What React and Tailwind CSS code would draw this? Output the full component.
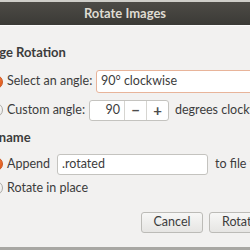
import React from "react";

const font = { fontFamily: 'Lato, "Open Sans", sans-serif' };

function Radio({ checked }) {
  return checked ? (
    <span className="flex h-[14px] w-[14px] shrink-0 items-center justify-center rounded-full border border-[#c9541f] bg-gradient-to-b from-[#f2783a] to-[#dd5515]">
      <span className="block h-[5px] w-[5px] rounded-full bg-white" />
    </span>
  ) : (
    <span className="block h-[14px] w-[14px] shrink-0 rounded-full border border-[#a9a8a4] bg-gradient-to-b from-[#fbfbfa] to-[#ebeae8]" />
  );
}

export default function App() {
  return (
    <div
      className="flex h-[250px] w-[250px] flex-col overflow-hidden bg-[#f2f1f0] text-[12.5px] text-[#3c3c3c]"
      style={font}
    >
      <div className="h-[2px] shrink-0 bg-[#cfcec9]" />
      <div className="flex h-[23px] shrink-0 items-center justify-center bg-gradient-to-b from-[#4d4b46] to-[#3b3a36] text-[13px] font-bold text-[#dfdbd2]">
        Rotate Images
      </div>
      <div className="h-[1px] shrink-0 bg-[#fbfbfb]" />

      <div className="ml-[-22px] flex flex-1 flex-col">
        <div className="mt-[18px] h-[16px] shrink-0 whitespace-nowrap text-[13px] font-bold leading-[16px]">Image Rotation</div>

        <div className="mt-[10px] flex h-[23px] shrink-0 items-center">
          <span className="ml-[11px] shrink-0"><Radio checked /></span>
          <span className="ml-[4px] w-[89px] shrink-0 whitespace-nowrap">Select an angle:</span>
          <div className="flex h-[23px] w-[200px] shrink-0 items-center whitespace-nowrap rounded-[3px] border border-[#e8b49a] bg-white px-[4px]">
            90° clockwise
          </div>
        </div>

        <div className="mt-[7px] flex h-[20px] shrink-0 items-center">
          <span className="ml-[11px] shrink-0"><Radio /></span>
          <span className="ml-[4px] w-[82px] shrink-0 whitespace-nowrap">Custom angle:</span>
          <div className="flex h-[21px] w-[80px] shrink-0 items-stretch rounded-[3px] border border-[#c4c3bf] bg-white">
            <div className="flex w-[34px] items-center justify-end pr-[4px]">90</div>
            <div className="flex w-[22px] items-center justify-center border-l border-[#d6d5d1] text-[15px] font-bold text-[#4c4c4c]">−</div>
            <div className="flex flex-1 items-center justify-center border-l border-[#d6d5d1] text-[15px] font-bold text-[#4c4c4c]">+</div>
          </div>
          <span className="ml-[6px] shrink-0 whitespace-nowrap">degrees clockwise</span>
        </div>

        <div className="mt-[9px] h-[16px] shrink-0 whitespace-nowrap text-[13px] font-bold leading-[16px]">Filename</div>

        <div className="mt-[9px] flex h-[20px] shrink-0 items-center">
          <span className="ml-[11px] shrink-0"><Radio checked /></span>
          <span className="ml-[4px] w-[50px] shrink-0 whitespace-nowrap">Append</span>
          <div className="flex h-[21px] w-[151px] shrink-0 items-center rounded-[3px] border border-[#c4c3bf] bg-white px-[4px]">
            .rotated
          </div>
          <span className="ml-[7px] shrink-0 whitespace-nowrap">to file title</span>
        </div>

        <div className="mt-[5px] flex h-[18px] shrink-0 items-center">
          <span className="ml-[11px] shrink-0"><Radio /></span>
          <span className="ml-[4px] shrink-0 whitespace-nowrap">Rotate in place</span>
        </div>
      </div>

      <div className="mb-[14px] flex shrink-0 gap-[6px] pl-[141px]">
        <button className="flex h-[21px] w-[62px] shrink-0 items-center justify-center rounded-[3px] border border-[#bcbbb7] bg-gradient-to-b from-[#f7f7f6] to-[#e6e5e3] text-[12.5px] text-[#3c3c3c]">
          Cancel
        </button>
        <button className="flex h-[21px] w-[62px] shrink-0 items-center justify-center rounded-[3px] border border-[#bcbbb7] bg-gradient-to-b from-[#f7f7f6] to-[#e6e5e3] text-[12.5px] text-[#3c3c3c]">
          Rotate
        </button>
      </div>
      <div className="h-[3px] shrink-0 bg-[#a8a7a3]" />
    </div>
  );
}
